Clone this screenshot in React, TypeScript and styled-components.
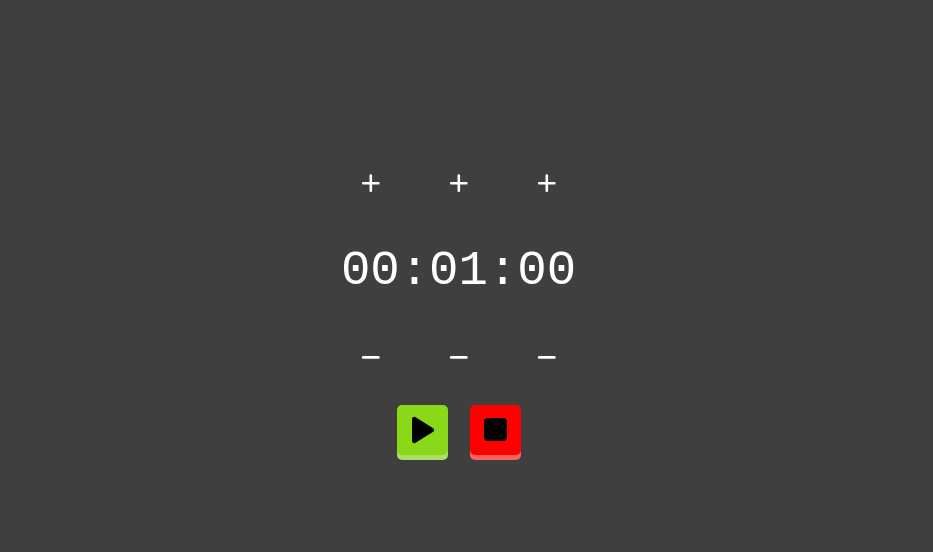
import React, { useState } from "react";
import styled, { createGlobalStyle } from "styled-components";

const GlobalStyle = createGlobalStyle`
  body { margin: 0; background: #3f3f3f; }
`;

const Page = styled.main`
  min-height: 100vh;
  box-sizing: border-box;
  padding: 78px 16px 0 0;
  display: flex;
  flex-direction: column;
  align-items: center;
  justify-content: center;
  color: #fff;
`;

const StepRow = styled.div`
  display: flex;
  gap: 64px;
`;

const StepButton = styled.button`
  width: 24px;
  height: 24px;
  padding: 0;
  border: 0;
  background: none;
  color: inherit;
  display: grid;
  place-items: center;
  cursor: pointer;
`;

const Time = styled.time`
  margin: 39px 0 37px;
  font: 49px/74px "Liberation Mono", monospace;
`;

const Actions = styled.div`
  display: flex;
  gap: 22px;
  margin: 36px 0 5px;
`;

const ActionButton = styled.button<{ $face: string; $edge: string }>`
  width: 51px;
  height: 50px;
  padding: 0;
  border: 0;
  border-radius: 5px;
  background: ${(p) => p.$face};
  box-shadow: 0 5px 0 ${(p) => p.$edge};
  display: grid;
  place-items: center;
  cursor: pointer;
`;

const StepIcon = ({ path }: { path: string }) => (
  <svg width="24" height="24" fill="none" stroke="currentColor" strokeWidth="2.6" strokeLinecap="round" aria-hidden="true">
    <path d={path} />
  </svg>
);

const units = ["hours", "minutes", "seconds"];
const sizes = [3600, 60, 1];
const pad = (n: number) => String(n).padStart(2, "0");

export default function App() {
  const [total, setTotal] = useState(60);
  const step = (d: number) => setTotal((t) => Math.max(0, t + d));
  return (
    <Page>
      <GlobalStyle />
      <StepRow>
        {units.map((u, i) => (
          <StepButton key={u} aria-label={`Add ${u}`} onClick={() => step(sizes[i])}>
            <StepIcon path="M4.2 12.3H19.4M11.8 4.5V19.7" />
          </StepButton>
        ))}
      </StepRow>
      <Time>{`${pad(Math.floor(total / 3600))}:${pad(Math.floor(total / 60) % 60)}:${pad(total % 60)}`}</Time>
      <StepRow>
        {units.map((u, i) => (
          <StepButton key={u} aria-label={`Subtract ${u}`} onClick={() => step(-sizes[i])}>
            <StepIcon path="M4.2 12.4H19.4" />
          </StepButton>
        ))}
      </StepRow>
      <Actions>
        <ActionButton $face="#8ad919" $edge="#abde62" aria-label="Start">
          <svg width="23" height="28" viewBox="0 0 23 28" aria-hidden="true">
            <path d="M1 3.5C1 1 3 .1 5 1.4L21.8 12C23.6 13.2 23.6 14.8 21.8 16L5 26.6C3 27.9 1 27 1 24.5Z" />
          </svg>
        </ActionButton>
        <ActionButton $face="#ff0000" $edge="#ff5f5f" aria-label="Stop">
          <svg width="23" height="23" aria-hidden="true"><rect width="23" height="23" rx="4" /></svg>
        </ActionButton>
      </Actions>
    </Page>
  );
}
